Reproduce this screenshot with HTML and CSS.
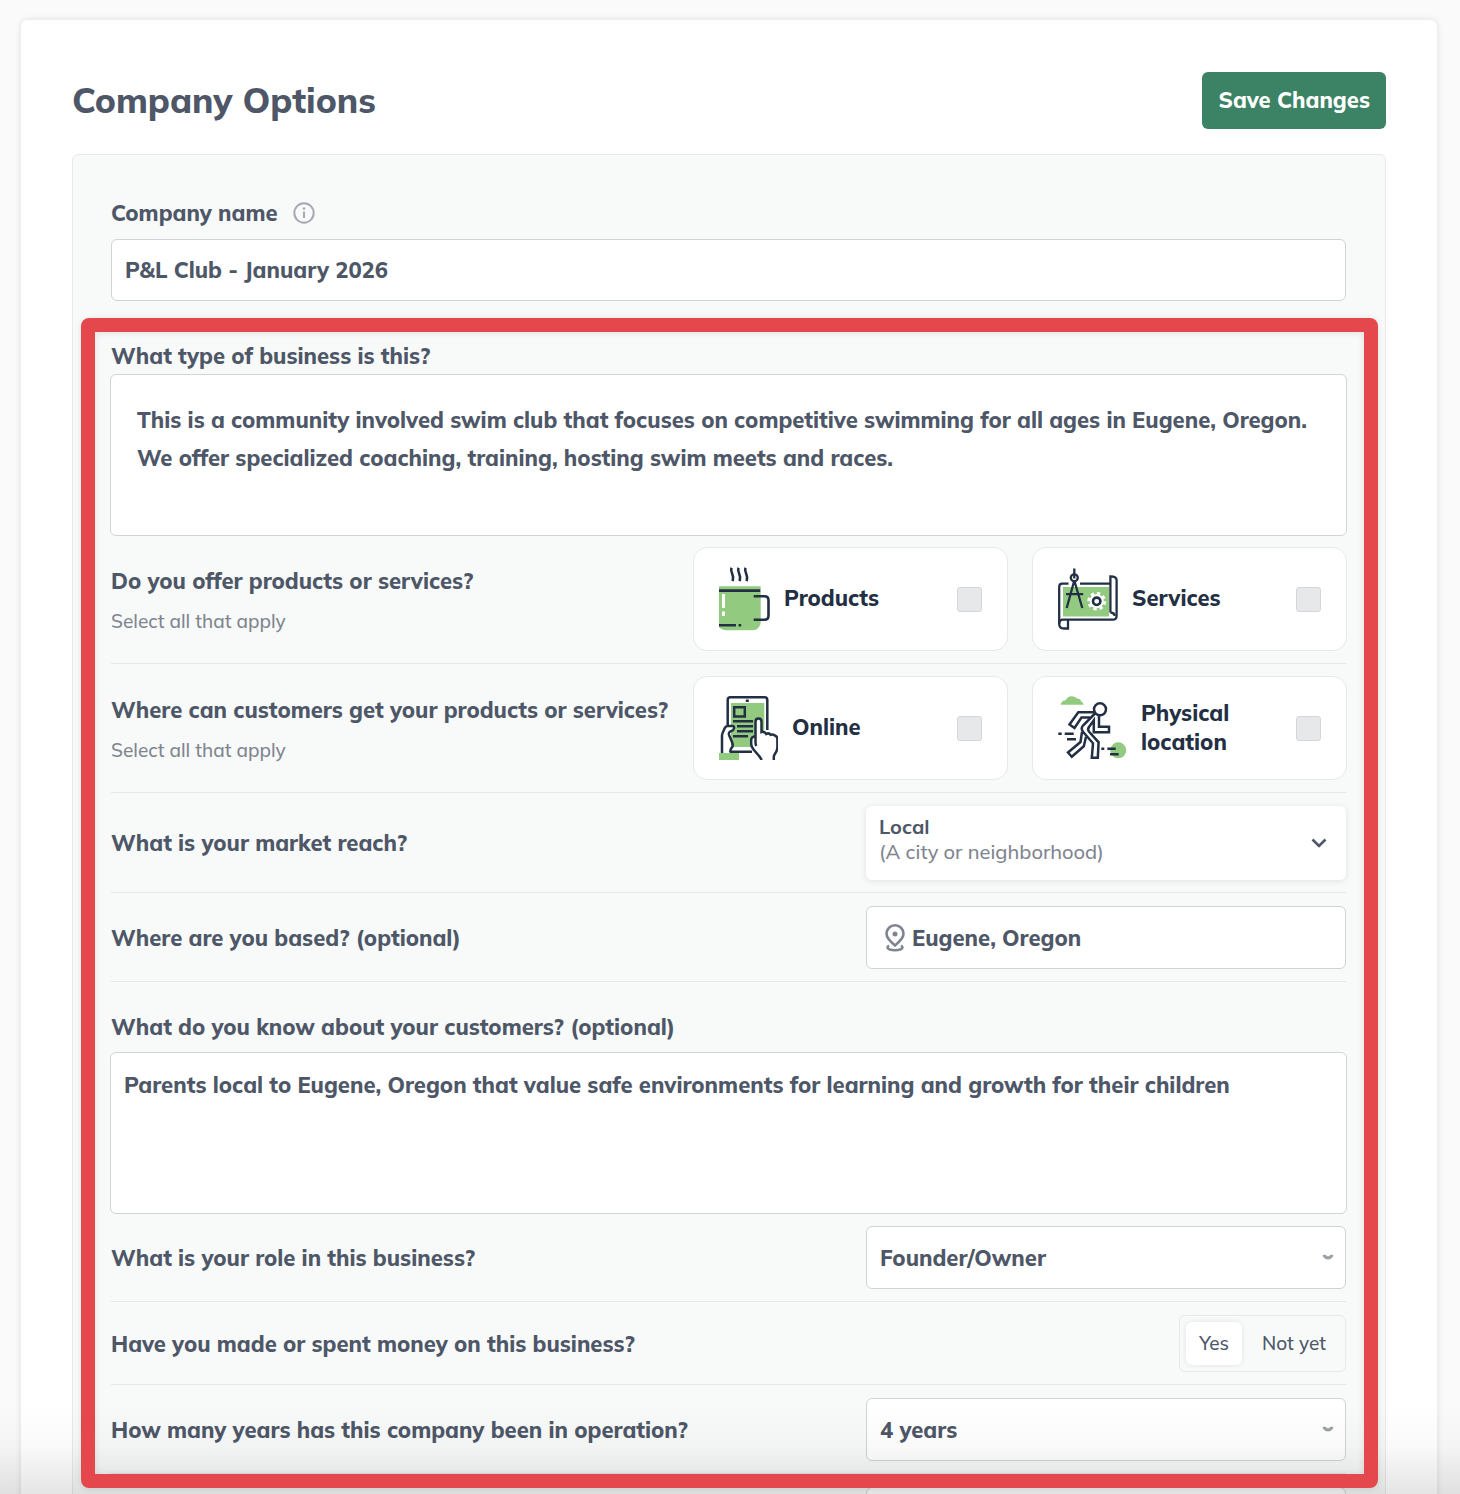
FILE: index.html
```html
<!DOCTYPE html>
<html lang="en">
<head>
<meta charset="utf-8">
<meta name="viewport" content="width=device-width, initial-scale=1">
<title>Company Options</title>
<link rel="stylesheet" href="styles.css">
</head>
<body>
<main class="card">
  <header class="card-header">
    <h1 class="title">Company Options</h1>
    <button class="save" type="submit" form="company-form">Save Changes</button>
  </header>

  <form class="panel" id="company-form">
    <div class="name-field">
      <div class="label-row">
        <label class="question" for="company-name">Company name</label>
        <svg class="info" viewBox="0 0 22 22" width="22" height="22" aria-hidden="true">
          <circle cx="11" cy="11" r="9.7" fill="none" stroke="currentColor" stroke-width="2"/>
          <path d="M11 9.4v6.600" stroke="currentColor" stroke-width="2"/>
          <circle cx="11" cy="6.500" r="1.300" fill="currentColor"/>
        </svg>
      </div>
      <input class="box" id="company-name" type="text" value="P&amp;L Club - January 2026">
    </div>

    <section class="highlight">
      <div class="stack">
        <label class="question" for="business-type">What type of business is this?</label>
        <textarea class="box area area-roomy" id="business-type">This is a community involved swim club that focuses on competitive swimming for all ages in Eugene, Oregon. We offer specialized coaching, training, hosting swim meets and races.</textarea>
      </div>

      <div class="row row-options">
        <div class="prompt">
          <span class="question">Do you offer products or services?</span>
          <span class="hint">Select all that apply</span>
        </div>
        <div class="options">
          <label class="option">
            <svg viewBox="0 0 51 64" width="51" height="64" fill="none" stroke="#232f43" stroke-width="2.6" aria-hidden="true">
              <path d="M0 19.3h41.7v36a8 8 0 0 1-8 8H7.500Q3 63.300 0 60z" fill="#92cb80" stroke="none"/>
              <path d="M0 23.600h41.200M0 58.200h17M19.600 58.200h2.600"/>
              <path d="M34.700 29.200h10.800q4 0 4 4v15.500q0 4-4 4H34.700"/>
              <path d="M4.500 27v14M4.500 44.500v4.500" stroke="#fff" stroke-width="3"/>
              <path d="M12.500.8c-2 5 3.500 6 1.200 13.400M19.500.8c-2 5 3.500 6 1.200 13.400M26.500.8c-2 5 3.500 6 1.200 13.400"/>
            </svg>
            <span class="option-name">Products</span>
            <input class="check" type="checkbox">
          </label>
          <label class="option">
            <svg viewBox="0 0 60 62" width="60" height="62" fill="none" stroke="#232f43" stroke-width="2.3" aria-hidden="true">
              <path d="M5 19h46v29.500H5z" fill="#92cb80" stroke="none"/>
              <path d="M10.500 15.700H4.200Q1.200 15.700 1.200 19v37q0 4.500 4.800 4.500h4V52"/>
              <path d="M22 15.700h30M1.200 56q0-4.300 4-4.300h49.600q3.800 0 3.800-4V12q0-3.700-6.200-3.700V44.500"/>
              <path d="M52.400 44.500q4.200.2 4.200 3.500"/>
              <path d="M16.300 12.500L8.700 40M16.300 12.500L24.300 40M8 26.200h17.200M16.300.5v10"/>
              <circle cx="16.300" cy="9.800" r="3.500"/>
              <circle cx="38.700" cy="33.300" r="7" fill="#fff" stroke="none"/>
              <circle cx="38.700" cy="33.300" r="8" stroke="#fff" stroke-width="2.800" stroke-dasharray="3.300 2.983"/>
              <circle cx="38.700" cy="33.300" r="3.700" stroke-width="2.600"/>
            </svg>
            <span class="option-name">Services</span>
            <input class="check" type="checkbox">
          </label>
        </div>
      </div>

      <div class="row row-options">
        <div class="prompt">
          <span class="question">Where can customers get your products or services?</span>
          <span class="hint">Select all that apply</span>
        </div>
        <div class="options">
          <label class="option">
            <svg viewBox="0 0 59 64" width="59" height="64" fill="none" stroke="#232f43" stroke-width="2.500" aria-hidden="true">
              <path d="M12 7h33.300v44H12z" fill="#92cb80" stroke="none"/>
              <path d="M3 57V38.300L6.700 30h8.600v4.500L9.500 38l4 10.500-2.500 8z" fill="#fff" stroke="none"/>
              <path d="M36.700 42V25q3-5 6 0v12l7 .5 8.600 5V52l-5 12H44L32 50v-9h4.700z" fill="#fff" stroke="none"/>
              <path d="M8.700 29V4q0-2.700 2.700-2.700h34.200q2.700 0 2.700 2.700v30M11 55.700h22"/>
              <path d="M26.800 4.800h3M14 25.300h20M18 30.300h16M18 35.300h16M14 40.300h15"/>
              <path d="M15.200 11.200h10.600v9.200H15.200z"/>
              <path d="M3 57V40q0-2 .8-3.500l2-4.500q.9-2 3-2h4.700q2 0 1.500 2.300T12.500 35q-3.800 1.200-2.300 4.500t3 7-1.200 6.200L11 56.500"/>
              <path d="M37.300 50q-.8-1.500-.8-4V25.500q0-3 3-3t3 3V36q3-.8 4.800 2 2.500-1.500 4.300.8 3-1 4.600 1 2.200.7 2.200 3.500v8q0 2.500-1.800 5.500-1.800 2.700-1.800 4.200v3"/>
              <path d="M36.500 40.500q-4.300 0-4.300 3.500v4q0 2.700 2.300 5.500l6 7 2.300 3.500"/>
              <path d="M0 57h20v7H0z" fill="#92cb80" stroke="none"/>
            </svg>
            <span class="option-name">Online</span>
            <input class="check" type="checkbox">
          </label>
          <label class="option">
            <svg viewBox="0 0 69 64" width="69" height="64" fill="none" stroke="#232f43" stroke-width="2.500" aria-hidden="true">
              <path d="M2.700 8.700q.6-4 4.500-4.200Q10 0 14 .2q3.500.2 5 2.300 3.500.2 4 2.700 2.400 1 2.700 3.500z" fill="#92cb80" stroke="none"/>
              <circle cx="60.300" cy="54.300" r="8" fill="#92cb80" stroke="none"/>
              <circle cx="42" cy="13.300" r="6"/>
              <path d="M36 16.300H20.300l-8.800 12.200 5 3.500 7-10.500H32"/>
              <path d="M37.500 17L25 29.500q-2.500 3 0 6.200l10 11.600-1.200 14.500h6l.8-15.500-9.500-10.500q-1.800-2.200-.3-4.500l5-7v12H51v-5.600H41V18.500"/>
              <path d="M24 36l-1.500 10L10 56.500l3.800 4.300 12-10.500 2.200-9.500"/>
              <path d="M.3 37.700h3.400M6.700 37.700h9M9 43.300h9M43.300 52.700h3M49.300 52.700h8.400M52 58.300h8.700"/>
            </svg>
            <span class="option-name">Physical<br>location</span>
            <input class="check" type="checkbox">
          </label>
        </div>
      </div>

      <div class="row">
        <span class="question" id="reach-label">What is your market reach?</span>
        <button class="reach" type="button" aria-labelledby="reach-label reach-value">
          <span class="reach-text" id="reach-value"><b class="reach-name">Local</b><span class="reach-note">(A city or neighborhood)</span></span>
          <svg viewBox="0 0 16 10" width="16" height="10" fill="none" stroke="currentColor" stroke-width="2.600" aria-hidden="true"><path d="M1.500 1.500L8 8l6.500-6.500"/></svg>
        </button>
      </div>

      <div class="row">
        <label class="question" for="location">Where are you based? (optional)</label>
        <div class="control location">
          <svg viewBox="0 0 20 28" width="20" height="28" fill="none" stroke="currentColor" stroke-width="2.600" aria-hidden="true">
            <path d="M10 21.500Q1.500 14.500 1.500 9.800a8.500 8.500 0 0 1 17 0Q18.500 14.500 10 21.500z"/>
            <circle cx="10" cy="10" r="2.500" fill="currentColor" stroke="none"/>
            <path d="M4 21.500q-3 2 0 3.700 6 2 12 0 3-1.700 0-3.700"/>
          </svg>
          <input class="location-input" id="location" type="text" value="Eugene, Oregon">
        </div>
      </div>

      <div class="stack stack-spaced">
        <label class="question" for="customers">What do you know about your customers? (optional)</label>
        <textarea class="box area" id="customers">Parents local to Eugene, Oregon that value safe environments for learning and growth for their children</textarea>
      </div>

      <div class="row">
        <label class="question" for="role">What is your role in this business?</label>
        <div class="control select">
          <select class="select-input" id="role"><option>Founder/Owner</option></select>
          <svg class="caret" viewBox="0 0 12 8" width="12" height="8" fill="currentColor" aria-hidden="true"><path d="M.8.800h2.400L6 2.600 8.800.8h2.400Q11.500 2 10.500 3.200 9 5.600 6 5.600T1.500 3.200Q.5 2 .8.800z"/></svg>
        </div>
      </div>

      <div class="row">
        <span class="question" id="money-label">Have you made or spent money on this business?</span>
        <div class="toggle" role="group" aria-labelledby="money-label">
          <button class="toggle-item toggle-active" type="button" aria-pressed="true">Yes</button>
          <button class="toggle-item" type="button" aria-pressed="false">Not yet</button>
        </div>
      </div>

      <div class="row">
        <label class="question" for="years">How many years has this company been in operation?</label>
        <div class="control select">
          <select class="select-input" id="years"><option>4 years</option></select>
          <svg class="caret" viewBox="0 0 12 8" width="12" height="8" fill="currentColor" aria-hidden="true"><path d="M.8.800h2.400L6 2.600 8.800.8h2.400Q11.500 2 10.500 3.200 9 5.600 6 5.600T1.500 3.200Q.5 2 .8.800z"/></svg>
        </div>
      </div>
    </section>

    <div class="row">
      <span></span>
      <div class="control"></div>
    </div>
  </form>
</main>
</body>
</html>
```

FILE: styles.css
```css
* { box-sizing: border-box; }

:root {
  --text: #4e5768;
  --ink: #232f43;
  --muted: #7f8590;
  --line: #e6e9e8;
  --border: #d0d4d5;
}

body {
  margin: 0;
  height: 100vh;
  overflow: hidden;
  padding: 20px 23px 0 21px;
  background: #fafafa;
  color: var(--text);
  font-family: Mulish, Muli, Lato, sans-serif;
  font-size: 22px;
  font-weight: 760;
  line-height: 32px;
}

/* fade along the bottom edge of the window */
body::after {
  content: "";
  position: fixed;
  inset: auto 0 0;
  height: 90px;
  background: linear-gradient(rgba(0, 0, 0, 0), rgba(0, 0, 0, 0.02) 45%, rgba(0, 0, 0, 0.1));
  pointer-events: none;
}

button, input, select, textarea { font: inherit; color: inherit; margin: 0; }

.card {
  background: #fff;
  border-radius: 6px;
  box-shadow: 0 0 6px rgba(0, 0, 0, 0.12);
  padding: 52px 51px;
}

.card-header {
  display: flex;
  justify-content: space-between;
  align-items: center;
  margin-bottom: 25px;
}

.title { margin: 0; padding-bottom: 2px; font-size: 35px; line-height: 48px; font-weight: 800; }

.save {
  height: 57px;
  padding: 0 16px 1px;
  border: 0;
  border-radius: 6px;
  background: #3c8264;
  color: #fff;
  font-weight: 850;
}

.panel {
  border: 1px solid #e8eaea;
  border-radius: 6px;
  background: #f8faf9;
  padding: 42px 39px 40px 38px;
}

.label-row { display: flex; align-items: center; gap: 15px; margin-bottom: 10px; }
.info { color: #a6a9b3; }

.box {
  display: block;
  width: 100%;
  height: 62px;
  padding: 0 13px;
  border: 1px solid var(--border);
  border-radius: 6px;
  background: #fff;
}

.highlight { position: relative; margin-top: 31px; }

.highlight::after {
  content: "";
  position: absolute;
  z-index: 1;
  inset: -14px -32px -14px -30px;
  border: 14px solid #e5484c;
  border-radius: 8px;
  box-shadow: 0 1px 6px rgba(0, 0, 0, 0.1), inset 0 1px 7px rgba(0, 0, 0, 0.1);
  pointer-events: none;
}

.stack { display: flex; flex-direction: column; gap: 2px; padding-top: 8px; margin: 0 -1px -1px; }
.stack .question { padding-left: 1px; }
.stack-spaced { gap: 9px; padding-top: 29px; }

.area { height: 162px; padding: 13px; line-height: 38px; resize: none; overflow: hidden; }
.area-roomy { padding: 26px; }

.row {
  display: flex;
  justify-content: space-between;
  align-items: center;
  padding: 13px 0 12px;
  border-bottom: 1px solid var(--line);
}

.row-options { padding: 12px 0; }

.prompt { display: flex; flex-direction: column; gap: 8px; padding-top: 4px; }
.hint { font-size: 19px; font-weight: 500; color: var(--muted); }

.options { display: grid; grid-template-columns: 315px 315px; gap: 24px; margin-right: -1px; }

.option {
  display: flex;
  align-items: center;
  gap: 14px;
  height: 104px;
  padding: 0 25px;
  border: 1px solid var(--line);
  border-radius: 14px;
  background: #fff;
  color: var(--ink);
}

.option-name { flex: 1; padding-bottom: 1px; line-height: 29px; }

.check {
  appearance: none;
  width: 25px;
  height: 25px;
  border: 1px solid #d4d6d9;
  border-radius: 3px;
  background: #e7e8ea;
}

.reach {
  display: flex;
  justify-content: space-between;
  align-items: center;
  width: 480px;
  height: 74px;
  padding: 0 19px 0 13px;
  border: 0;
  border-radius: 6px;
  background: #fff;
  box-shadow: 0 1px 6px rgba(0, 0, 0, 0.1);
  text-align: left;
}

.reach-text { display: flex; flex-direction: column; padding-bottom: 8px; font-size: 20px; line-height: 25px; }
.reach-name { font-weight: 700; }
.reach-note { font-weight: 500; color: var(--muted); }

.control {
  display: flex;
  align-items: center;
  width: 480px;
  height: 63px;
  border: 1px solid var(--border);
  border-radius: 6px;
  background: #fff;
}

.location { padding-left: 18px; gap: 7px; }
.location svg { color: #7f8590; }
.location-input { flex: 1; min-width: 0; border: 0; padding: 0; background: none; }

.select { display: grid; }
.select-input {
  grid-area: 1 / 1;
  height: 100%;
  padding: 0 13px;
  border: 0;
  appearance: none;
  background: none;
}
.caret { grid-area: 1 / 1; justify-self: end; margin-right: 11px; color: #9aa3a7; pointer-events: none; }

.toggle {
  display: flex;
  gap: 7px;
  height: 57px;
  padding: 6px;
  border: 1px solid var(--line);
  border-radius: 6px;
}

.toggle-item {
  padding: 0 13px 2px;
  border: 0;
  border-radius: 6px;
  background: none;
  font-size: 19px;
  font-weight: 500;
}

.toggle-active { background: #fff; box-shadow: 0 0 5px rgba(0, 0, 0, 0.1); }
```
